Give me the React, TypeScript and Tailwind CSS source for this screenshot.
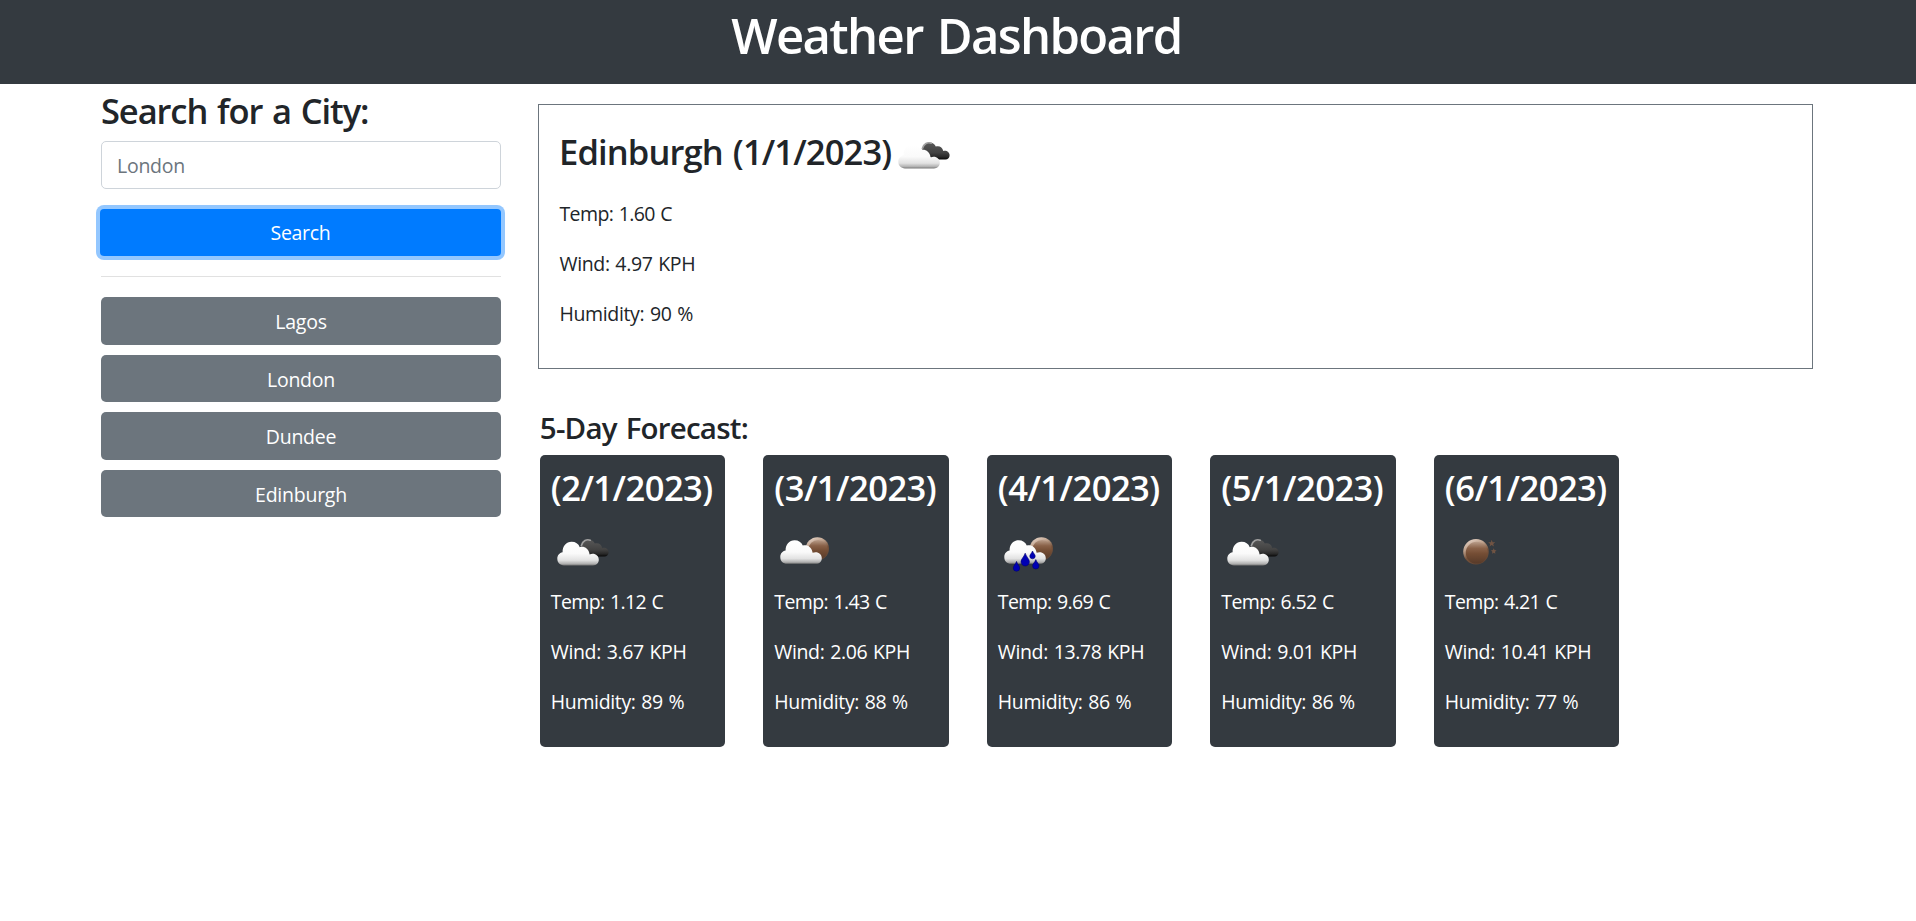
type IconName = "broken" | "scattered" | "rain" | "clear";

const HISTORY = ["Lagos", "London", "Dundee", "Edinburgh"];

const FORECAST: { date: string; icon: IconName; temp: string; wind: string; humidity: string }[] = [
  { date: "(2/1/2023)", icon: "broken", temp: "1.12", wind: "3.67", humidity: "89" },
  { date: "(3/1/2023)", icon: "scattered", temp: "1.43", wind: "2.06", humidity: "88" },
  { date: "(4/1/2023)", icon: "rain", temp: "9.69", wind: "13.78", humidity: "86" },
  { date: "(5/1/2023)", icon: "broken", temp: "6.52", wind: "9.01", humidity: "86" },
  { date: "(6/1/2023)", icon: "clear", temp: "4.21", wind: "10.41", humidity: "77" },
];

function Cloud({ id }: { id: string }) {
  return (
    <path
      fill={`url(#${id}-cloud)`}
      d="M13 40.4 C9 40.4 6.3 37.6 6.3 33.8 C6.3 30.2 8.4 27.8 11.6 27.2 C11.4 21.2 15.2 16.8 20.6 16.8 C24.6 16.8 27.4 18.8 28.8 22.2 C32.8 20.8 37.8 23.4 38.6 29.4 C43.6 27.6 47.8 30.6 47.8 34.8 C47.8 38.2 45.4 40.4 42 40.4 Z"
    />
  );
}

function Drop({ x, y, w, h }: { x: number; y: number; w: number; h: number }) {
  const r = w / 2;
  return (
    <path
      fill="#0000b4"
      stroke="#00006e"
      strokeWidth="0.6"
      d={`M${x} ${y} C${x + r * 0.3} ${y + h * 0.3} ${x + r} ${y + h * 0.45} ${x + r} ${y + h - r} A${r} ${r} 0 0 1 ${x - r} ${y + h - r} C${x - r} ${y + h * 0.45} ${x - r * 0.3} ${y + h * 0.3} ${x} ${y} Z`}
    />
  );
}

function Moon({ id, cx, cy, r }: { id: string; cx: number; cy: number; r: number }) {
  return (
    <>
      <circle cx={cx} cy={cy} r={r} fill={`url(#${id}-rim)`} />
      <circle cx={cx + 0.7} cy={cy + 0.9} r={r - 1.9} fill={`url(#${id}-moon)`} />
    </>
  );
}

function WeatherIcon({ name, id, className }: { name: IconName; id: string; className?: string }) {
  return (
    <svg viewBox="0 0 62 50" className={`h-[50px] w-[62px] shrink-0 ${className ?? ""}`} aria-hidden="true">
      <defs>
        <linearGradient id={`${id}-cloud`} x1="0" y1="0" x2="0" y2="1">
          <stop offset="0" stopColor="#ffffff" />
          <stop offset="0.5" stopColor="#fafafa" />
          <stop offset="0.78" stopColor="#e2e2e2" />
          <stop offset="0.93" stopColor="#b0b0b0" />
          <stop offset="1" stopColor="#777777" />
        </linearGradient>
        <linearGradient id={`${id}-dark`} x1="0" y1="0" x2="0" y2="1">
          <stop offset="0" stopColor="#585858" />
          <stop offset="0.6" stopColor="#424242" />
          <stop offset="0.85" stopColor="#282828" />
          <stop offset="1" stopColor="#080808" />
        </linearGradient>
        <linearGradient id={`${id}-rim`} x1="0.25" y1="0" x2="0.7" y2="1">
          <stop offset="0" stopColor="#e6d3c6" />
          <stop offset="0.3" stopColor="#bda08b" />
          <stop offset="0.6" stopColor="#75513a" />
          <stop offset="1" stopColor="#5f4535" />
        </linearGradient>
        <linearGradient id={`${id}-moon`} x1="0" y1="0" x2="0" y2="1">
          <stop offset="0" stopColor="#b99d8a" />
          <stop offset="0.3" stopColor="#896148" />
          <stop offset="0.55" stopColor="#744d34" />
          <stop offset="1" stopColor="#573a29" />
        </linearGradient>
      </defs>
      {name === "broken" && (
        <>
          <path
            fill={`url(#${id}-dark)`}
            d="M30 24 C30 18 33 14.6 37.4 14.6 C40.8 14.6 43 16.4 43.8 18.6 C47 17.2 50.6 19.2 51.2 23 C54.4 22 57.6 24.2 57.6 27.2 C57.6 29.8 56 31.4 53.4 31.4 L42 31.4 Z"
          />
          <path
            d="M30.4 20.4 C31.8 15.8 35.6 13.8 39.2 15.2"
            fill="none"
            stroke="#a0a0a0"
            strokeWidth="1.7"
            strokeLinecap="round"
          />
          <Cloud id={id} />
        </>
      )}
      {(name === "scattered" || name === "rain") && (
        <>
          <Moon id={id} cx={43.4} cy={23.8} r={11.6} />
          <g transform="translate(0 -1.6)">
            <Cloud id={id} />
          </g>
        </>
      )}
      {name === "rain" && (
        <>
          <Drop x={18.5} y={36.4} w={6.4} h={9.8} />
          <Drop x={27.2} y={28.2} w={8.4} h={12.8} />
          <Drop x={34.5} y={26} w={5.4} h={7.8} />
          <Drop x={37.8} y={34.6} w={6.4} h={9.4} />
        </>
      )}
      {name === "clear" && (
        <>
          <Moon id={id} cx={31} cy={26.8} r={12.8} />
          <path
            fill="#715443"
            d="M46.7 14.8 L47.6 17.2 L50.2 17.3 L48.2 18.9 L48.9 21.4 L46.7 20 L44.5 21.4 L45.2 18.9 L43.2 17.3 L45.8 17.2 Z M48.7 23.2 L49.5 25.1 L51.5 25.4 L50 26.7 L50.4 28.7 L48.7 27.7 L47 28.7 L47.4 26.7 L45.9 25.4 L47.9 25.1 Z"
          />
        </>
      )}
    </svg>
  );
}

function Stats({ temp, wind, humidity }: { temp: string; wind: string; humidity: string }) {
  return (
    <div className="flex flex-col gap-5 text-[19.5px] leading-[30px] tracking-[-0.36px] whitespace-nowrap [word-spacing:1px]">
      <p className="tracking-[-0.62px]">Temp: {temp} C</p>
      <p>Wind: {wind} KPH</p>
      <p>Humidity: {humidity} %</p>
    </div>
  );
}

export default function App() {
  return (
    <div className="min-h-screen bg-white font-['Open_Sans','Noto_Sans',sans-serif] text-[#212529]">
      <header className="flex h-[84px] justify-center bg-[#343a40] pt-[5px] pr-[3px]">
        <h1 className="text-[49px] leading-[60px] font-semibold tracking-[-1.65px] text-white [word-spacing:3px]">
          Weather Dashboard
        </h1>
      </header>

      <main className="flex pl-[101px]">
        <aside className="w-[400px] shrink-0 pt-1.5">
          <h2 className="text-[34.5px] leading-[42px] font-semibold tracking-[-1.1px] [word-spacing:2px]">
            Search for a City:
          </h2>
          <input
            type="text"
            placeholder="London"
            className="mt-[9px] block h-12 w-full rounded-[5px] border border-[#ced4da] px-[15px] pt-px text-[19.5px] tracking-[-0.25px] placeholder:text-[#6c757d] placeholder:opacity-100"
          />
          <button className="mt-5 -ml-px block h-[47px] w-[401px] rounded-[4px] bg-[#007bff] pt-px text-[19.5px] tracking-[-0.3px] text-white ring-4 ring-[#93c7ff]">
            Search
          </button>
          <hr className="mt-5 border-t border-[#e1e1e1]" />
          <div className="mt-5 flex flex-col gap-2.5">
            {HISTORY.map((city) => (
              <button
                key={city}
                className="h-[47.5px] w-full rounded-[5px] bg-[#6c757d] pt-0.5 text-[19.5px] tracking-[-0.24px] text-white"
              >
                {city}
              </button>
            ))}
          </div>
        </aside>

        <div className="ml-[37px] w-[1275px] shrink-0 pt-5">
          <section className="h-[265px] border border-[#6c757d] pt-[26px] pl-5">
            <div className="flex h-[42px]">
              <h2 className="w-[333px] text-[34.5px] leading-[42px] font-semibold tracking-[-0.87px] whitespace-nowrap [word-spacing:2px]">
                Edinburgh (1/1/2023)
              </h2>
              <WeatherIcon name="broken" id="today" className="-mt-[3px]" />
            </div>
            <div className="pt-[26px] pl-[0.5px]">
              <Stats temp="1.60" wind="4.97" humidity="90" />
            </div>
          </section>

          <section className="pt-[41px] pl-[1.8px]">
            <h3 className="text-[29.5px] leading-9 font-semibold tracking-[-0.78px] [word-spacing:2px]">
              5-Day Forecast:
            </h3>
            <div className="mt-[9px] flex gap-[38px]">
              {FORECAST.map((day, i) => (
                <article key={day.date} className="h-[292px] w-[185.5px] rounded-[5px] bg-[#343a40] pt-3 pl-[11px] text-white">
                  <h2 className="text-[34.5px] leading-[42px] font-semibold tracking-[-0.52px] whitespace-nowrap">
                    {day.date}
                  </h2>
                  <WeatherIcon name={day.icon} id={`day${i}`} className="mt-4 mb-3" />
                  <Stats temp={day.temp} wind={day.wind} humidity={day.humidity} />
                </article>
              ))}
            </div>
          </section>
        </div>
      </main>
    </div>
  );
}
